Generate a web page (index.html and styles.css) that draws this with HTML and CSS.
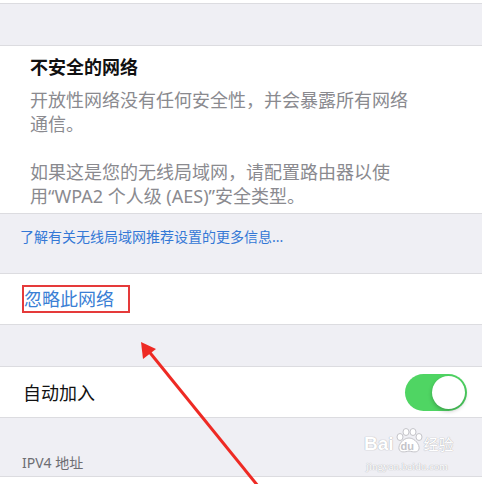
FILE: index.html
```html
<!DOCTYPE html>
<html lang="zh-CN">
<head>
    <meta charset="UTF-8">
    <meta name="viewport" content="width=device-width, initial-scale=1.0">
    <title>无线局域网</title>
    <link rel="stylesheet" href="styles.css">
</head>
<body>
    <div class="top-strip"></div>
    <div class="spacer"></div>

    <!-- 不安全的网络 -->
    <section class="card notice">
        <h3>不安全的网络</h3>
        <p>开放性网络没有任何安全性，并会暴露所有网络通信。</p>
        <p class="second">如果这是您的无线局域网，请配置路由器以使<span class="nowrap">用“WPA2</span> 个人级 (AES)”安全类型。</p>
    </section>
    <div class="more-link">了解有关无线局域网推荐设置的更多信息...</div>

    <section class="card row">
        <span class="forget">忽略此网络</span>
    </section>
    <div class="spacer"></div>

    <section class="card row toggle-row">
        <span>自动加入</span>
        <div class="switch"><div class="knob"></div></div>
    </section>

    <div class="group-title">IPV4 地址</div>
    <section class="card bottom"></section>

    <!-- 水印 -->
    <div class="watermark">
        <div class="wm-logo">
            <span>Bai</span>
            <span class="paw">
                <svg width="28" height="26" viewBox="0 0 28 26">
                    <g fill="#fff" stroke="#c4c4c9" stroke-width="1">
                        <ellipse cx="5" cy="9" rx="3" ry="3.5"/>
                        <ellipse cx="11" cy="4" rx="3" ry="3.5"/>
                        <ellipse cx="18" cy="4" rx="3" ry="3.5"/>
                        <ellipse cx="24" cy="9" rx="3" ry="3.5"/>
                        <path d="M14 10 C8 10 3 17 4 21 C5 25 10 24 14 23 C18 24 23 25 24 21 C25 17 20 10 14 10 Z"/>
                    </g>
                </svg>
                <span class="du">du</span>
            </span>
            <span class="jy">经验</span>
        </div>
        <div class="wm-url">jingyan.baidu.com</div>
    </div>

    <!-- 红色箭头 -->
    <svg class="arrow" width="482" height="484" viewBox="0 0 482 484">
        <line x1="258" y1="486" x2="147" y2="349" stroke="#ee2a24" stroke-width="3"/>
        <polygon points="141,342 143,359 156,349" fill="#ee2a24"/>
    </svg>
</body>
</html>
```

FILE: styles.css
```css
* {
    margin: 0;
    padding: 0;
    box-sizing: border-box;
}

body {
    width: 482px;
    height: 484px;
    overflow: hidden;
    position: relative;
    background-color: #efeff4;
    font-family: "Noto Sans", "Noto Sans CJK SC", sans-serif;
    color: #111;
}

.top-strip {
    height: 4px;
    background-color: #fff;
    border-bottom: 1px solid #dcdce0;
}

.spacer {
    height: 41px;
}

.card {
    background-color: #fff;
    border-top: 1px solid #dcdce0;
    border-bottom: 1px solid #dcdce0;
}

/* Cảnh báo */
.notice {
    padding: 9px 20px 5px 30px;
}
.notice h3 {
    font-size: 18px;
    line-height: 24px;
    font-weight: bold;
    margin-bottom: 9px;
}
.notice p {
    font-size: 18px;
    line-height: 24px;
    color: #8a8a8f;
    width: 385px;
}
.notice p.second {
    margin-top: 24px;
}
.nowrap {
    white-space: nowrap;
}

.more-link {
    height: 59px;
    padding: 13px 0 0 20px;
    font-size: 14px;
    line-height: 20px;
    color: #3478d6;
}

.row {
    height: 52px;
    display: flex;
    align-items: center;
    padding-left: 23px;
    font-size: 18px;
}

.forget {
    color: #3a7fd5;
    line-height: 22px;
    border: 2px solid #e53a3a;
    padding: 1px 14px 1px 0;
    margin-left: -1px;
    margin-top: -1px;
}

.toggle-row {
    justify-content: space-between;
    padding-right: 15px;
}

.switch {
    width: 62px;
    height: 37px;
    border-radius: 19px;
    background-color: #4fd563;
    padding: 2px;
    display: flex;
    justify-content: flex-end;
}
.knob {
    width: 33px;
    height: 33px;
    border-radius: 50%;
    background-color: #fff;
    box-shadow: 0 2px 4px rgba(0, 0, 0, 0.25);
}

.group-title {
    height: 58px;
    padding: 34px 0 0 22px;
    font-size: 14px;
    color: #6d6d72;
}

.bottom {
    height: 20px;
    border-bottom: none;
}

/* Watermark */
.watermark {
    position: absolute;
    left: 364px;
    top: 428px;
    color: #fff;
    text-shadow: 0 0 1px #b5b5ba, 0 0 1px #b5b5ba;
}
.wm-logo {
    display: flex;
    align-items: flex-end;
    font-family: "Liberation Sans", sans-serif;
    font-size: 19px;
    font-weight: bold;
    line-height: 20px;
}
.paw {
    position: relative;
    width: 28px;
    height: 26px;
    margin: 0 1px;
}
.paw svg {
    position: absolute;
    left: 0;
    top: 0;
}
.du {
    position: absolute;
    left: 6px;
    bottom: 2px;
    font-size: 11px;
    line-height: 12px;
    color: #c4c4c9;
    text-shadow: none;
}
.jy {
    font-family: "Noto Sans CJK SC", sans-serif;
    font-size: 15px;
    font-weight: normal;
}
.wm-url {
    font-family: "Liberation Serif", serif;
    font-size: 11px;
    line-height: 12px;
    margin-top: 6px;
    padding-left: 2px;
}

.arrow {
    position: absolute;
    left: 0;
    top: 0;
}
```
